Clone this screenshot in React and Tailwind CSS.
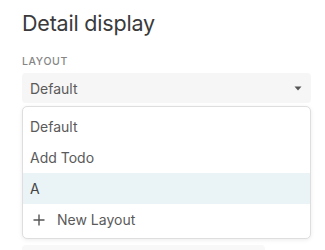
import React from "react";

export default function App() {
  return (
    <div
      className="w-[325px] h-[250px] overflow-hidden bg-white pl-[22px] pt-[9px]"
      style={{ fontFamily: "Inter, 'Noto Sans', sans-serif" }}
    >
      <h1 className="text-[21.5px] leading-[28px] text-[#3a3a3a] font-normal tracking-[-0.2px]">
        Detail display
      </h1>
      <div className="mt-[17px] text-[10.5px] leading-[16px] tracking-[0.06em] text-[#858585] font-medium">
        LAYOUT
      </div>
      <div className="mt-[3px] w-[289px] h-[30px] rounded-[4px] bg-[#f6f6f6] flex items-center justify-between pl-[8px] pr-[8px]">
        <span className="text-[14px] text-[#5a5a5a]">Default</span>
        <svg width="8" height="5" viewBox="0 0 8 5" className="mr-[1px]">
          <path d="M0.5 0.5 L7.5 0.5 L4 4.5 Z" fill="#555" />
        </svg>
      </div>
      <div className="mt-[3px] w-[289px] rounded-[5px] border border-[#dedede] bg-white pt-[4px] pb-[3px] shadow-[0_1px_4px_rgba(0,0,0,0.08)]">
        <div className="h-[31px] flex items-center pl-[7px] text-[14px] text-[#5a5a5a]">Default</div>
        <div className="h-[31px] flex items-center pl-[7px] text-[14px] text-[#5a5a5a]">Add Todo</div>
        <div className="h-[31px] flex items-center pl-[7px] text-[14px] text-[#444] bg-[#eaf4f7]">A</div>
        <div className="h-[31px] flex items-center pl-[10px] text-[14px] text-[#5a5a5a]">
          <svg width="12" height="12" viewBox="0 0 12 12">
            <path d="M6 0.5 V11.5 M0.5 6 H11.5" stroke="#555" strokeWidth="1.4" />
          </svg>
          <span className="ml-[12px]">New Layout</span>
        </div>
      </div>
      <div className="mt-[6px] w-[243px] h-[20px] rounded-[4px] bg-[#f8f8f8]" />
    </div>
  );
}
